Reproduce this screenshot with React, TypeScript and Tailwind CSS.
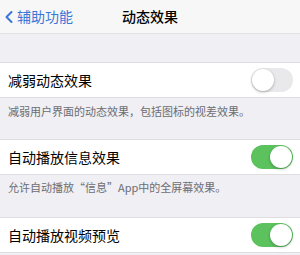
import { ChevronLeft } from 'lucide-react';

const font = { fontFamily: '"Noto Sans CJK SC", "Noto Sans", sans-serif' };

function Toggle({ on }: { on: boolean }) {
  return (
    <div
      className={`relative w-[42px] h-[24px] rounded-full ${on ? 'bg-[#5bc25e]' : 'bg-[#e9e9eb]'}`}
    >
      <div
        className={`absolute top-[1px] w-[22px] h-[22px] rounded-full bg-white shadow-[0_1px_3px_rgba(0,0,0,0.3)] ${on ? 'right-[1px]' : 'left-[1px]'}`}
      ></div>
    </div>
  );
}

function Row({ label, on }: { label: string; on: boolean }) {
  return (
    <div className="flex items-center justify-between h-[36px] bg-white border-y border-[#dedee2] pl-[8px] pr-[7px]">
      <span className="text-[14px] text-black leading-none">{label}</span>
      <Toggle on={on} />
    </div>
  );
}

export default function App() {
  return (
    <div className="w-[300px] h-[255px] overflow-hidden bg-[#efeff4]" style={font}>
      {/* Nav bar */}
      <div className="relative flex items-center h-[34px] bg-[#f7f7f7] border-b border-[#e2e2e4]">
        <div className="flex items-center text-[#3876d8]">
          <ChevronLeft className="w-[20px] h-[22px] -ml-[1px]" strokeWidth={2.4} />
          <span className="text-[14px] -ml-[2px]">辅助功能</span>
        </div>
        <span className="absolute left-0 right-0 text-center text-[14px] text-black font-medium pointer-events-none">
          动态效果
        </span>
      </div>

      <div className="h-[28px]"></div>

      <Row label="减弱动态效果" on={false} />
      <div className="h-[41px] pl-[8px] pt-[5px] text-[11px] text-[#6d6d72] leading-[16px]">
        减弱用户界面的动态效果，包括图标的视差效果。
      </div>

      <Row label="自动播放信息效果" on={true} />
      <div className="h-[42px] pl-[8px] pt-[4px] text-[11px] text-[#6d6d72] leading-[16px]">
        允许自动播放“信息”App中的全屏幕效果。
      </div>

      <Row label="自动播放视频预览" on={true} />
    </div>
  );
}
